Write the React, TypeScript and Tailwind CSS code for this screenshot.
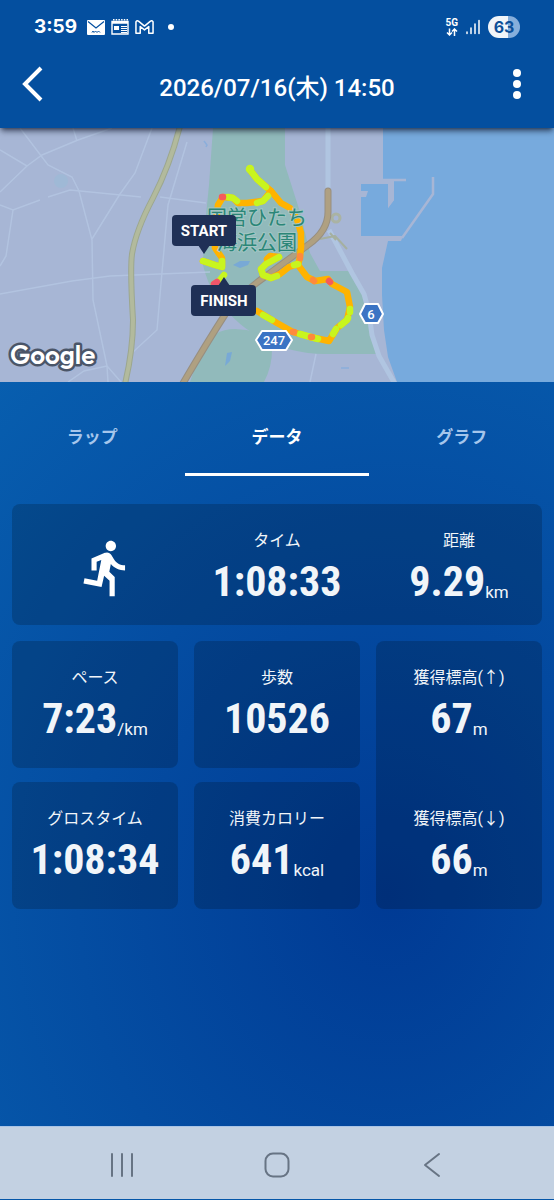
type StatProps = {
  label: string;
  value: string;
  unit?: string;
};

const tabs = [
  { label: "ラップ", active: false },
  { label: "データ", active: true },
  { label: "グラフ", active: false },
];

const routeBase = [
  "M250 170L257 179L271 191L281 203L290 208L297 219L301 233L301 247L300 257L298 265L307 277L315 281L328 279L332 284L347 292L350 307L347 320L337 328L329 341L310 337L293 332L277 323L257 311",
  "M271 191L263 201L247 203L238 203L233 198L223 197L218 205L215 230L215 248L222 258L222 267L215 265L203 261",
  "M298 264L289 267L280 274L271 278L263 275L261 269L266 264L279 257L270 256L267 259",
];

const routeFast = [
  "M250 170L257 179L266 187",
  "M268 196L263 201L257 203",
  "M237 201L233 198L228 197",
  "M222 261L222 267L215 265L203 261",
  "M294 265L298 264",
  "M277 276L271 278L263 275L261 269L266 264L279 257",
  "M350 309L350 312",
  "M348 318L347 320L341 325",
  "M336 329L333 334",
  "M318 339L300 334",
  "M272 320L263 315",
];

const minorRoads = [
  "M20 128L48 165L72 177L79 191L92 240L93 300L107 366L121 382",
  "M0 192L27 166L42 155L78 140L112 128",
  "M0 150L27 166",
  "M73 128L77 141",
  "M152 128L135 173L120 194L92 239",
  "M0 205L13 210L40 200M48 197L70 190L141 197",
  "M13 210L6 256L0 266",
  "M0 294L72 281L110 276L210 272",
  "M107 366L84 371L68 382M107 366L108 382",
  "M187 142L168 205L162 272L157 330L133 352",
  "M160 197L206 203",
  "M316 354L310 382",
];

function Stat({ label, value, unit }: StatProps) {
  return (
    <div className="flex flex-col items-center">
      <p className="text-base leading-6 text-slate-100">{label}</p>
      <p className="flex items-end whitespace-nowrap text-slate-100">
        <span className="font-['Roboto_Condensed','Liberation_Sans_Narrow',sans-serif] text-[42px] leading-[58px] font-bold">
          {value}
        </span>
        {unit && <span className="text-[17px] leading-[38px]">{unit}</span>}
      </p>
    </div>
  );
}

function StatusBar() {
  return (
    <div className="flex h-[54px] items-center justify-between px-[34px]">
      <div className="flex items-center gap-[6px]">
        <span className="mr-1 font-[Inter,sans-serif] text-[19px] font-bold">3:59</span>
        <svg viewBox="0 0 18 15" className="h-[15px] w-[18px]">
          <rect width="18" height="15" rx="1" fill="#fff" />
          <path d="M1 1.5L9 8L17 1.5" fill="none" stroke="#044f9f" strokeWidth="1.2" />
          <path d="M5 12.5L6 11L7 12.5L8.5 11L10 12.5L11.5 11L13 12.5" fill="none" stroke="#044f9f" />
        </svg>
        <svg viewBox="0 0 18 16" className="h-4 w-[18px]">
          <path d="M1 2.5H17V15H1Z" fill="none" stroke="#fff" strokeWidth="1.4" />
          <path d="M1 3.5H17" stroke="#fff" strokeWidth="2.5" />
          <path d="M2 .8H17" stroke="#fff" strokeWidth="1.5" strokeDasharray="1.5 1.2" />
          <rect x="3" y="7" width="5" height="4" fill="#fff" />
          <path d="M10 7.5H16M10 9.5H16M10 11.5H16M10 13.5H16" stroke="#fff" strokeWidth="1.1" />
        </svg>
        <svg viewBox="0 0 20 16" className="h-4 w-[19px]">
          <path
            d="M1 14.5V2.5Q2 .5 4 2L10 7L16 2Q18 .5 19 2.5V14.5H14.5V7.5L10 11L5.5 7.5V14.5Z"
            fill="none"
            stroke="#fff"
            strokeWidth="1.6"
            strokeLinejoin="round"
          />
        </svg>
        <span className="ml-2 size-[6px] rounded-full bg-white" />
      </div>

      <div className="flex items-center gap-2">
        <div className="flex flex-col items-center">
          <span className="text-[10px] leading-[10px] font-bold">5G</span>
          <svg viewBox="0 0 12 8" className="h-2 w-3" fill="none" stroke="#fff" strokeWidth="1.5">
            <path d="M3.5 .5V7M1 4.5L3.5 7L6 4.5M8.5 8V1M6 3.5L8.5 1L11 3.5" />
          </svg>
        </div>
        <svg viewBox="0 0 14 16" className="h-4 w-[14px]" stroke="#fff" strokeWidth="1.5" strokeLinecap="round">
          <path d="M1 13V14.5M5 9V14.5M9 5V14.5M13 1.5V14.5" />
        </svg>
        <span className="flex h-[22px] w-8 items-center justify-center rounded-full bg-linear-to-r from-slate-100 from-63% to-[#86aedb] to-63% font-[Inter,sans-serif] text-base font-bold text-[#0d4f98]">
          63
        </span>
      </div>
    </div>
  );
}

function RouteMap() {
  return (
    <svg viewBox="0 128 554 254" className="block h-auto w-full bg-[#a7b6d5]" aria-label="コースの地図">
      {/* parks */}
      <path
        d="M213 128L209 185L204 235L203 265Q207 282 215 295Q235 325 260 337Q290 354 325 354H377L366 298L352 271H320L310 253L300 212L285 165V128Z"
        fill="#91babb"
      />
      <path d="M190 382L201 349Q213 329 235 329Q262 330 272 344Q273 366 264 382Z" fill="#91babb" />
      <circle cx="61" cy="181" r="7" fill="#9fb9d6" />
      <path d="M233 265L240 261L250 261L248 265L240 268ZM227 353L232 352L230 361L225 366Z" fill="#78a9d6" />
      <path d="M204 141L207 145L206 147M341 368H349" fill="none" stroke="#8baedb" strokeWidth="1.5" />

      {/* sea and harbour */}
      <path
        d="M383 128V180H394V200L388 208V184H361V190H367L366 197H361V236H403L401 241H388L382 268L382 295L384 330L388 357L397 382H554V128Z"
        fill="#77aadd"
      />
      <path d="M361 185H388V207L361 236Z" fill="#77aadd" />
      <path d="M361 191H368L366 197H361Z" fill="#a7b6d5" />
      <path d="M388 182H394V200L388 208Z" fill="#a7b6d5" />
      <path d="M383 180H406M402 238L433 194V177" fill="none" stroke="#a7b6d5" strokeWidth="2.5" />

      {/* roads */}
      <g fill="none" stroke="#b5c7e3" strokeWidth="1.5" opacity="0.8">
        {minorRoads.map((d) => (
          <path key={d} d={d} />
        ))}
      </g>
      <path
        d="M328 128V190M329 230L352 273L364 294Q369 310 372 335L379 356L395 384"
        fill="none"
        stroke="#b0c5e1"
        strokeWidth="5"
      />
      <g fill="none" strokeLinejoin="round">
        <path d="M180 126Q170 165 153 198Q136 230 132 254Q130 270 133 320Q133 350 125 384" stroke="#9ca78f" strokeWidth="6" />
        <path d="M180 126Q170 165 153 198Q136 230 132 254Q130 270 133 320Q133 350 125 384" stroke="#b2ba9d" strokeWidth="4" />
        <circle cx="336" cy="218" r="4" stroke="#aab3a3" strokeWidth="3" />
        <path d="M320 239L335 236L347 249M330 233L336 240" stroke="#a5b0a0" strokeWidth="2" />
        <g strokeLinecap="round">
          <path d="M182 385Q206 344 226 313Q240 294 266 276L308 245Q328 231 328 212V191" stroke="#988f80" strokeWidth="7" />
          <path d="M182 385Q206 344 226 313Q240 294 266 276L308 245Q328 231 328 212V191" stroke="#afa081" strokeWidth="5" />
        </g>
      </g>

      {/* running route, coloured by pace */}
      <g fill="none" strokeWidth="6.5" strokeLinecap="round" strokeLinejoin="round">
        {routeBase.map((d) => (
          <path key={d} d={d} stroke="#ffb300" />
        ))}
        {routeFast.map((d) => (
          <path key={d} d={d} stroke="#c8f51e" />
        ))}
        <circle cx="250" cy="169" r="1" stroke="#c8f51e" />
        <path d="M224 275L219 281L214 284" stroke="#c8f51e" />
        <path d="M217 282L214 284" stroke="#f0556a" />
        <path d="M223 197L222 197M329 281L330 282" stroke="#f55b5b" />
        <path d="M300 256V258M314 281L313 280M311 337L312 337M293 332L294 332" stroke="#ff8a3c" />
      </g>

      <g
        className="font-['Noto_Sans_CJK_JP',sans-serif] text-[20px]"
        fill="#2b8678"
        stroke="#a3c6c3"
        strokeWidth="2"
        paintOrder="stroke"
        textAnchor="middle"
      >
        <text x="257" y="225">国営ひたち</text>
        <text x="257" y="250">海浜公園</text>
      </g>

      {/* road shields */}
      <g
        className="font-[Roboto,sans-serif] text-[13px] font-medium"
        fill="#3b74c4"
        stroke="#fff"
        strokeWidth="2"
        strokeLinejoin="round"
        textAnchor="middle"
      >
        <path d="M256 340L262 331H286L292 340L286 350H262Z" />
        <path d="M360 314L365 304H378L383 314L378 323H365Z" />
        <text x="274" y="345" fill="#fff" stroke="none">247</text>
        <text x="371" y="319" fill="#fff" stroke="none">6</text>
      </g>

      {/* start and finish bubbles */}
      <g className="font-[Roboto,sans-serif] text-[15px] font-bold" fill="#1f3056" textAnchor="middle">
        <rect x="172" y="215" width="64" height="31" rx="4" />
        <path d="M198 245H210L204 254Z" />
        <rect x="191" y="285" width="65" height="31" rx="4" />
        <path d="M218 286H230L224 277Z" />
        <text x="204" y="236" fill="#fff">START</text>
        <text x="224" y="306" fill="#fff">FINISH</text>
      </g>

      <text
        x="10"
        y="364"
        className="font-[Outfit,Lato,sans-serif] text-[26px] font-semibold"
        fill="#fff"
        stroke="#4a5568"
        strokeWidth="5"
        strokeLinejoin="round"
        paintOrder="stroke"
      >
        Google
      </text>
    </svg>
  );
}

export default function App() {
  return (
    <div className="flex min-h-screen flex-col bg-[#0556a8] font-[Roboto,'Noto_Sans_CJK_JP',sans-serif] text-white">
      <header className="relative z-10 h-32 bg-[#044f9f] shadow-md shadow-slate-900/60">
        <StatusBar />
        <div className="flex h-[68px] items-center justify-between px-[22px]">
          <button type="button" aria-label="戻る" className="flex w-[30px] pb-2">
            <svg viewBox="0 0 22 36" className="h-9 w-[22px]" fill="none" stroke="#fff" strokeWidth="4">
              <path d="M19 2L3 18L19 34" />
            </svg>
          </button>
          <h1 className="text-2xl font-medium">2026/07/16(木) 14:50</h1>
          <button type="button" aria-label="メニュー" className="flex w-[30px] justify-center pb-2">
            <svg viewBox="0 0 8 30" className="h-[30px] w-2" fill="#fff">
              <circle cx="4" cy="4" r="4" />
              <circle cx="4" cy="15" r="4" />
              <circle cx="4" cy="26" r="4" />
            </svg>
          </button>
        </div>
      </header>

      <RouteMap />

      <main className="grow bg-[radial-gradient(ellipse_620px_720px_at_70%_69%,#003a94,#0860b0)] pb-6">
        <div role="tablist" className="grid grid-cols-3">
          {tabs.map((tab) => (
            <button
              key={tab.label}
              type="button"
              role="tab"
              aria-selected={tab.active}
              className={
                tab.active
                  ? "h-[94px] border-b-3 border-white pt-5 text-[17px] font-bold"
                  : "h-[94px] border-b-3 border-transparent pt-5 text-[17px] font-bold text-[#a5c6ec]"
              }
            >
              {tab.label}
            </button>
          ))}
        </div>

        <div className="mt-7 flex flex-col gap-4 px-3">
          <section className="grid h-[121px] grid-cols-3 gap-4 rounded-lg bg-black/18 pt-[25px]">
            <svg viewBox="0 0 24 24" className="mt-2 ml-16 size-[62px]" fill="#fff" aria-label="ランニング">
              <path d="M13.49 5.48c1.1 0 2-.9 2-2s-.9-2-2-2-2 .9-2 2 .9 2 2 2zm-3.6 13.9l1-4.4 2.1 2v6h2v-7.5l-2.1-2 .6-3c1.3 1.5 3.3 2.5 5.5 2.5v-2c-1.9 0-3.5-1-4.3-2.4l-1-1.6c-.4-.6-1-1-1.7-1-.3 0-.5.1-.8.1l-5.2 2.2v4.7h2v-3.4l1.8-.7-1.6 8.1-4.9-1-.4 2 7 1.4z" />
            </svg>
            <Stat label="タイム" value="1:08:33" />
            <Stat label="距離" value="9.29" unit="km" />
          </section>

          <div className="grid grid-cols-3 gap-x-4 gap-y-[14px]">
            <section className="h-[127px] rounded-lg bg-black/18 pt-[25px]">
              <Stat label="ペース" value="7:23" unit="/km" />
            </section>
            <section className="h-[127px] rounded-lg bg-black/18 pt-[25px]">
              <Stat label="歩数" value="10526" />
            </section>
            <section className="row-span-2 grid grid-rows-2 gap-[14px] rounded-lg bg-black/18">
              <div className="pt-[25px]">
                <Stat label="獲得標高(↑)" value="67" unit="m" />
              </div>
              <div className="pt-[25px]">
                <Stat label="獲得標高(↓)" value="66" unit="m" />
              </div>
            </section>
            <section className="h-[127px] rounded-lg bg-black/18 pt-[25px]">
              <Stat label="グロスタイム" value="1:08:34" />
            </section>
            <section className="h-[127px] rounded-lg bg-black/18 pt-[25px]">
              <Stat label="消費カロリー" value="641" unit="kcal" />
            </section>
          </div>
        </div>
      </main>

      <nav className="mb-px flex h-[73px] items-center justify-between border-t border-[#a9c4e6] bg-[#c3d1e2] px-[109px] pt-1">
        <button type="button" aria-label="履歴" className="flex w-[26px] justify-center">
          <svg viewBox="0 0 24 26" className="h-[26px] w-6" stroke="#677484" strokeWidth="2" strokeLinecap="round">
            <path d="M2 2V24M12 2V24M22 2V24" />
          </svg>
        </button>
        <button type="button" aria-label="ホーム" className="flex w-[26px] justify-center">
          <svg viewBox="0 0 26 26" className="size-[26px]" fill="none" stroke="#677484" strokeWidth="2">
            <rect x="1.5" y="1.5" width="23" height="23" rx="7.5" />
          </svg>
        </button>
        <button type="button" aria-label="戻る" className="flex w-[26px] justify-center">
          <svg viewBox="0 0 18 26" className="h-[26px] w-[18px]" fill="none" stroke="#677484" strokeWidth="2" strokeLinecap="round" strokeLinejoin="round">
            <path d="M16 2L2 13L16 24" />
          </svg>
        </button>
      </nav>
    </div>
  );
}
